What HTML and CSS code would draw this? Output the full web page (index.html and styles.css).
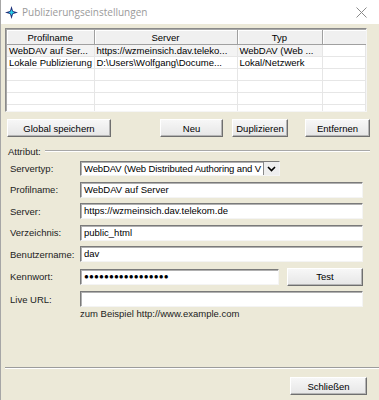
FILE: index.html
```html
<!DOCTYPE html>
<html lang="de">
<head>
  <meta charset="UTF-8" />
  <title>Publizierungseinstellungen</title>
  <link rel="stylesheet" href="styles.css">
</head>
<body>
  <div class="window">
    <div class="titlebar">
      <svg class="app-icon" width="13" height="13" viewBox="0 0 13 13">
        <path d="M6.5 0 L8 5 L13 6.5 L8 8 L6.5 13 L5 8 L0 6.5 L5 5 Z" fill="#1c2f7a"/>
        <path d="M6.5 3.5 L7.4 5.6 L9.5 6.5 L7.4 7.4 L6.5 9.5 L5.6 7.4 L3.5 6.5 L5.6 5.6 Z" fill="#2ad0e8"/>
      </svg>
      <span class="title">Publizierungseinstellungen</span>
      <svg class="close" width="11" height="11" viewBox="0 0 11 11">
        <path d="M0.5 0.5 L10.5 10.5 M10.5 0.5 L0.5 10.5" stroke="#8a8a8a" stroke-width="1" fill="none"/>
      </svg>
    </div>

    <div class="list">
      <table>
        <colgroup>
          <col style="width:87px"><col style="width:143px"><col style="width:85px"><col>
        </colgroup>
        <tr>
          <th>Profilname</th><th>Server</th><th>Typ</th><th></th>
        </tr>
        <tr class="sel">
          <td>WebDAV auf Ser...</td><td>https://wzmeinsich.dav.teleko...</td><td>WebDAV (Web ...</td><td class="blank"></td>
        </tr>
        <tr>
          <td>Lokale Publizierung</td><td>D:\Users\Wolfgang\Docume...</td><td>Lokal/Netzwerk</td><td></td>
        </tr>
        <tr><td></td><td></td><td></td><td></td></tr>
        <tr><td></td><td></td><td></td><td></td></tr>
        <tr><td></td><td></td><td></td><td></td></tr>
        <tr><td></td><td></td><td></td><td></td></tr>
      </table>
    </div>

    <div class="btn-row">
      <button class="btn btn-global">Global speichern</button>
      <button class="btn btn-neu">Neu</button>
      <button class="btn btn-dup">Duplizieren</button>
      <button class="btn btn-entf">Entfernen</button>
    </div>

    <div class="group-head">
      <span>Attribut:</span>
      <div class="etch"></div>
    </div>

    <div class="form">
      <label>Servertyp:</label>
      <div class="select">
        <span class="select-text">WebDAV (Web Distributed Authoring and V</span>
        <span class="select-btn">
          <svg width="9" height="6" viewBox="0 0 9 6"><path d="M1 1 L4.5 4.5 L8 1" stroke="#000" stroke-width="1.6" fill="none"/></svg>
        </span>
      </div>

      <label>Profilname:</label>
      <div class="field">WebDAV auf Server</div>

      <label>Server:</label>
      <div class="field">https://wzmeinsich.dav.telekom.de</div>

      <label>Verzeichnis:</label>
      <div class="field">public_html</div>

      <label>Benutzername:</label>
      <div class="field">dav</div>

      <label>Kennwort:</label>
      <div class="pw-row">
        <div class="field pw">&#9679;&#9679;&#9679;&#9679;&#9679;&#9679;&#9679;&#9679;&#9679;&#9679;&#9679;&#9679;&#9679;&#9679;&#9679;&#9679;&#9679;</div>
        <button class="btn btn-test">Test</button>
      </div>

      <label>Live URL:</label>
      <div class="field"></div>

      <span></span>
      <div class="hint">zum Beispiel http://www.example.com</div>
    </div>

    <div class="footer">
      <div class="sep"></div>
      <div class="footer-btns">
        <button class="btn btn-close">Schließen</button>
      </div>
    </div>
  </div>
</body>
</html>
```

FILE: styles.css
```css
body {
  margin: 0;
  font-family: "Liberation Sans", Arial, sans-serif;
  font-size: 9.5px;
  color: #000;
  background: #ece9d8;
}

.window {
  width: 379px;
  height: 400px;
  background: #ece9d8;
  border-left: 1px solid #a6a6a6;
  box-sizing: border-box;
  display: flex;
  flex-direction: column;
  overflow: hidden;
}

.titlebar {
  height: 24px;
  background: #fff;
  display: flex;
  align-items: center;
  padding-left: 4px;
  flex-shrink: 0;
}

.title {
  font-family: "Open Sans", sans-serif;
  font-size: 10px;
  color: #9a9a9a;
  margin-left: 4px;
  flex: 1;
}

.close {
  margin-right: 12px;
}

.list {
  margin: 4px 0 0 4px;
  width: 362px;
  height: 84px;
  box-sizing: border-box;
  background: #fff;
  border: 1px solid;
  border-color: #8a8a8a #f5f5f5 #f5f5f5 #8a8a8a;
  box-shadow: inset 1px 1px #a8a8a8;
  overflow: hidden;
  padding: 1px 0 0 1px;
}

table {
  border-collapse: collapse;
  table-layout: fixed;
  width: 100%;
}

th {
  height: 14px;
  padding: 0;
  background: #f0f0f0;
  font-weight: normal;
  border-right: 1px solid #a0a0a0;
  border-bottom: 1px solid #a0a0a0;
  box-shadow: inset 1px 1px #fff;
}

th:last-child {
  border-right: none;
}

td {
  height: 11px;
  padding: 0 2px;
  border-right: 1px solid #e6e6e6;
  border-bottom: 1px solid #e6e6e6;
  white-space: nowrap;
  overflow: hidden;
  line-height: 11px;
}

tr.sel td {
  background: #f3f3f3;
}

tr.sel td.blank {
  background: #fff;
}

.btn {
  font-family: "Liberation Sans", Arial, sans-serif;
  font-size: 9.5px;
  color: #000;
  height: 18px;
  padding: 0;
  background: linear-gradient(#f7f7f7, #e6e6e6);
  border: 1px solid;
  border-color: #fff #6f6f6f #6f6f6f #fff;
  box-shadow: inset -1px -1px #b5b5b5;
}

.btn-row {
  display: flex;
  margin-top: 7px;
  padding-left: 6px;
}

.btn-global { width: 104px; margin-right: 49px; }
.btn-neu { width: 63px; margin-right: 9px; }
.btn-dup { width: 56px; margin-right: 17px; }
.btn-entf { width: 65px; }

.group-head {
  display: flex;
  align-items: center;
  margin-top: 8px;
  padding: 0 9px 0 7px;
  height: 12px;
  color: #222;
}

.etch {
  flex: 1;
  height: 0;
  border-top: 1px solid #a8a8a8;
  border-bottom: 1px solid #fff;
  margin-left: 4px;
}

.form {
  display: grid;
  grid-template-columns: 70px 283px;
  row-gap: 5.5px;
  margin-top: 4px;
  padding-left: 9px;
  align-items: center;
}

.form label {
  color: #222;
}

.field {
  height: 16px;
  box-sizing: border-box;
  background: #fff;
  border: 1px solid;
  border-color: #7a7a7a #f4f4f4 #f4f4f4 #7a7a7a;
  box-shadow: inset 1px 1px #b0b0b0;
  padding: 0 3px;
  line-height: 14px;
  white-space: nowrap;
  overflow: hidden;
}

.select {
  width: 200px;
  height: 15px;
  box-sizing: border-box;
  display: flex;
  background: #fff;
  border: 1px solid;
  border-color: #7a7a7a #f4f4f4 #f4f4f4 #7a7a7a;
  box-shadow: inset 1px 1px #b0b0b0;
}

.select-text {
  flex: 1;
  padding-left: 3px;
  line-height: 13px;
  white-space: nowrap;
  overflow: hidden;
  letter-spacing: -0.12px;
}

.select-btn {
  width: 15px;
  background: #eeeeee;
  border-left: 1px solid #8a8a8a;
  display: flex;
  align-items: center;
  justify-content: center;
}

.pw-row {
  display: flex;
  align-items: center;
}

.pw {
  width: 202px;
  font-size: 8px;
  letter-spacing: 0.15px;
}

.btn-test {
  width: 77px;
  margin-left: 8px;
}

.hint {
  margin-top: -5px;
  color: #222;
}

.footer {
  margin-top: auto;
  padding-bottom: 5px;
}

.sep {
  margin-left: 4px;
  border-top: 1px solid #9c9c9c;
  border-bottom: 1px solid #fff;
}

.footer-btns {
  display: flex;
  justify-content: flex-end;
  padding-right: 12px;
  margin-top: 8px;
}

.btn-close {
  width: 77px;
}
```
